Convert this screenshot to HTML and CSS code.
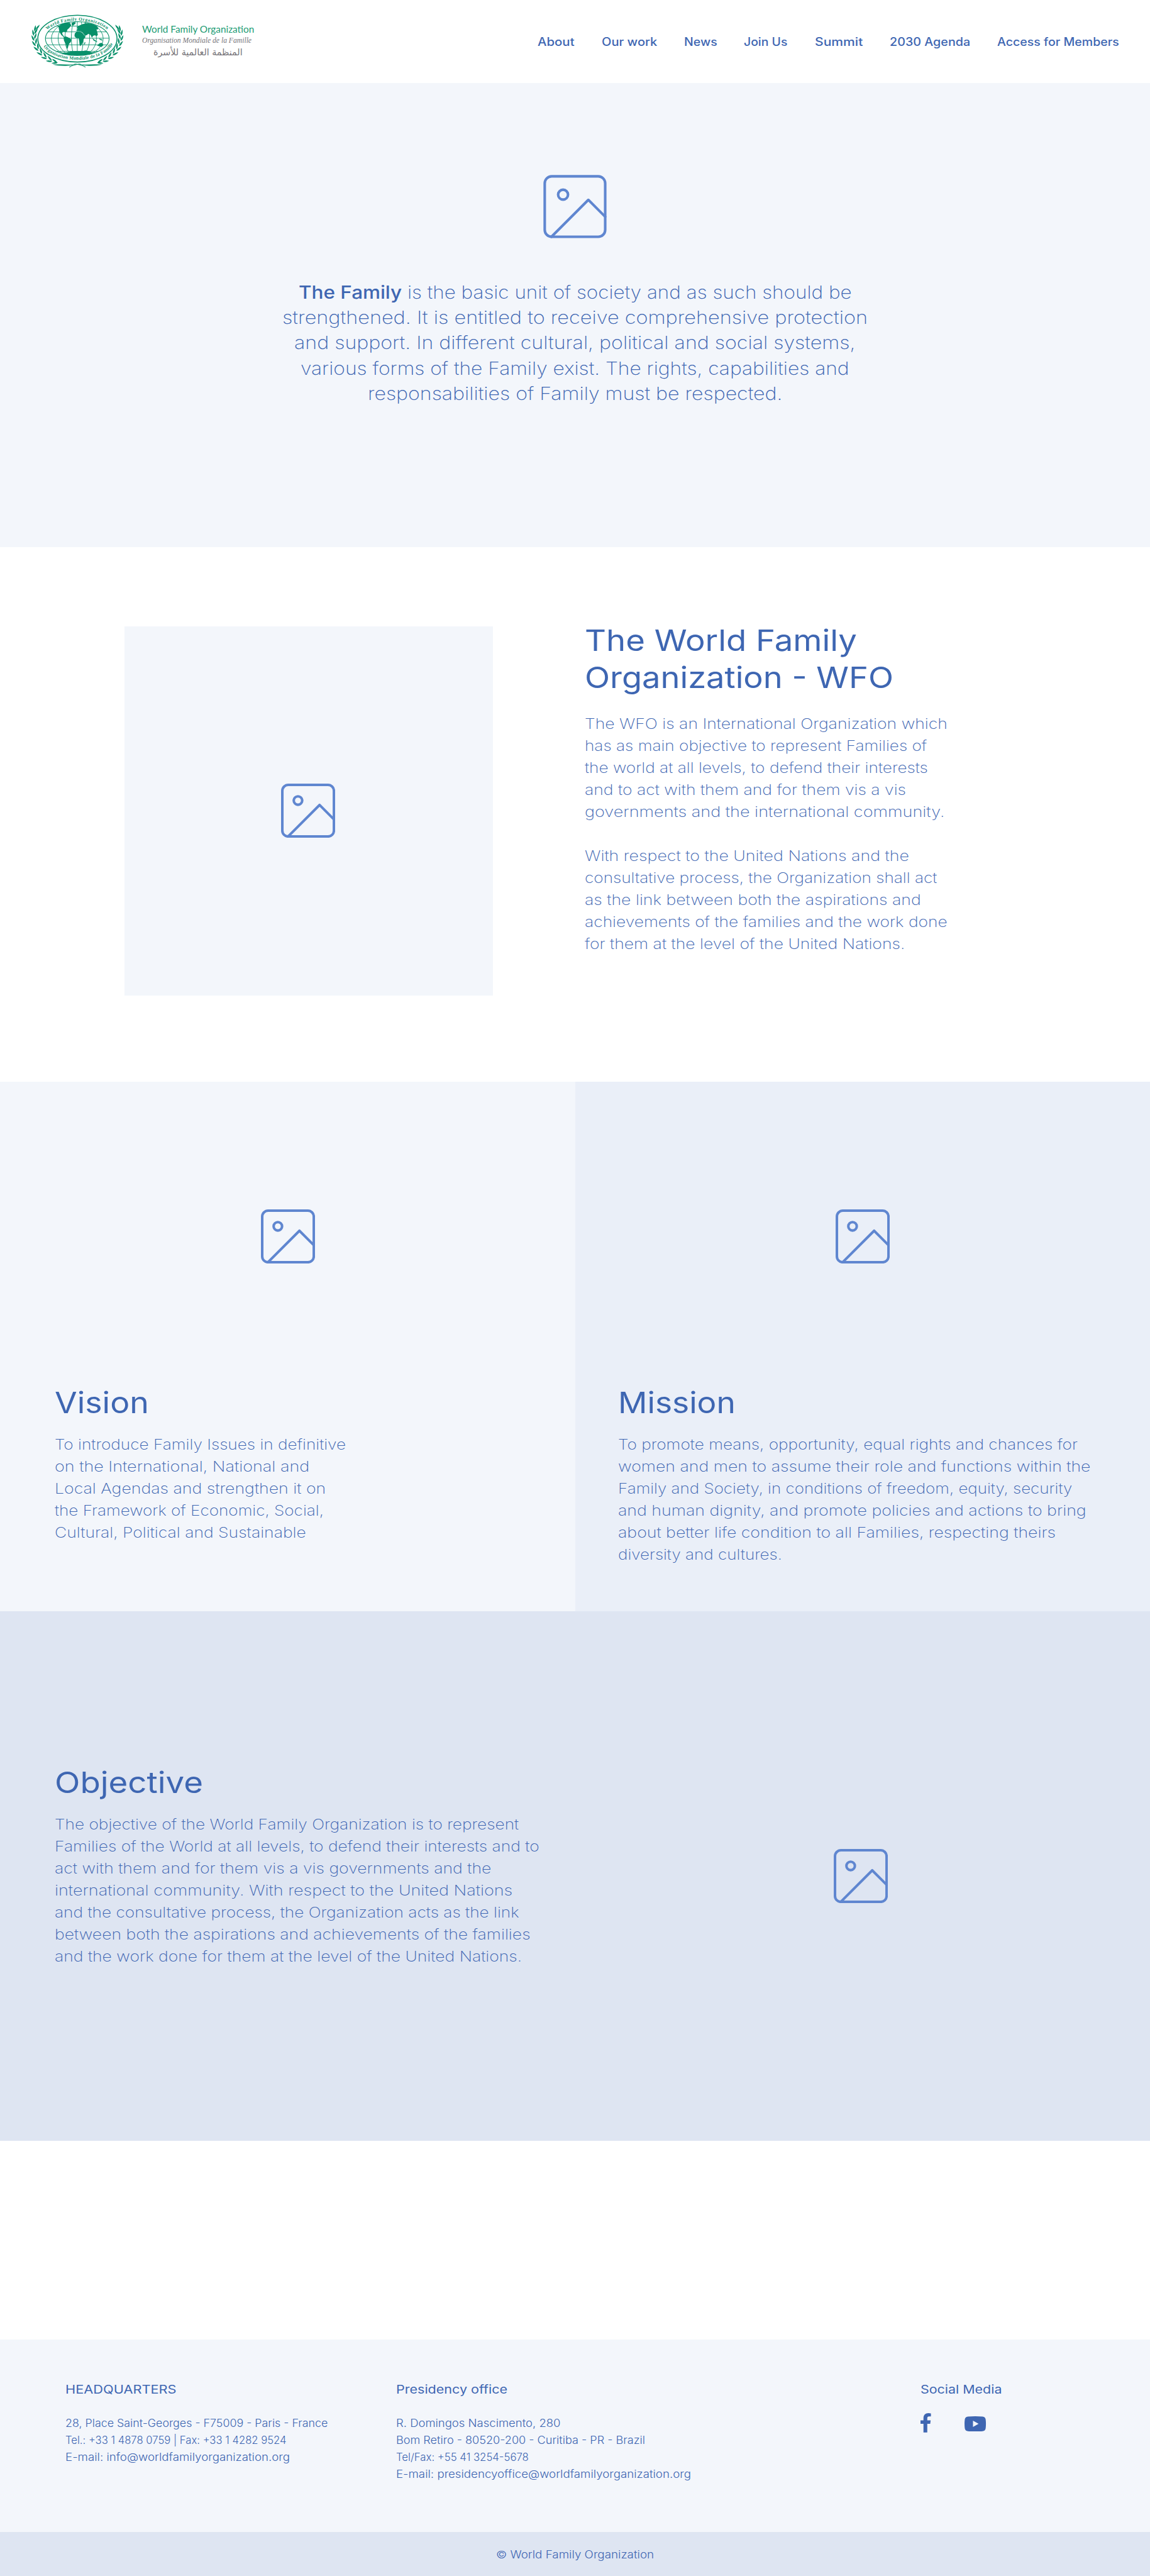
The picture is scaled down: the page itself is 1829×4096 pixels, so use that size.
FILE: index.html
```html
<!DOCTYPE html>
<html lang="en">
<head>
<meta charset="utf-8">
<title>World Family Organization</title>
<link rel="stylesheet" href="styles.css">
</head>
<body>
<svg class="defs" aria-hidden="true">
  <symbol id="picture" viewBox="0 0 128 128">
    <rect x="3" y="3" width="122" height="122" rx="14"/>
    <circle cx="40" cy="40" r="10"/>
    <path d="M16.5 125 91 50.500 125 84.500"/>
  </symbol>
</svg>

<header class="header">
  <a class="brand">
    <svg class="emblem" viewBox="0 0 750 480" role="img" aria-label="Emblem">
      <defs>
        <path id="arc-top" d="M126 218A245 130 0 0 1 616 218"/>
        <path id="arc-bottom" d="M112 218A259 148 0 0 0 630 218"/>
        <clipPath id="globe"><ellipse cx="370" cy="216" rx="226" ry="120"/></clipPath>
        <path id="leaf" d="M0 0Q14 -15 46 -3Q20 9 0 0Z"/>
        <g id="laurel">
          <use href="#leaf" transform="translate(228 386) rotate(-140)"/><use href="#leaf" transform="translate(232 386) rotate(-182)"/>
          <use href="#leaf" transform="translate(190 372) rotate(-128)"/><use href="#leaf" transform="translate(192 377) rotate(-172)"/>
          <use href="#leaf" transform="translate(153 352) rotate(-118)"/><use href="#leaf" transform="translate(156 358) rotate(-162)"/>
          <use href="#leaf" transform="translate(120 325) rotate(-106)"/><use href="#leaf" transform="translate(122 333) rotate(-150)"/>
          <use href="#leaf" transform="translate(94 292) rotate(-94)"/><use href="#leaf" transform="translate(95 302) rotate(-138)"/>
          <use href="#leaf" transform="translate(76 256) rotate(-80)"/><use href="#leaf" transform="translate(76 268) rotate(-124)"/>
          <use href="#leaf" transform="translate(66 220) rotate(-68)"/><use href="#leaf" transform="translate(65 232) rotate(-112)"/>
          <use href="#leaf" transform="translate(66 184) rotate(-56)"/><use href="#leaf" transform="translate(62 196) rotate(-98)"/>
          <use href="#leaf" transform="translate(76 154) rotate(-50)"/><use href="#leaf" transform="translate(68 166) rotate(-78)"/>
          <path d="M196 399Q260 396 320 400Q350 399 371 394Q340 408 290 409Q230 410 196 399Z"/>
          <path class="stem" d="M428 418Q400 400 350 396"/>
        </g>
      </defs>
      <ellipse class="ring" cx="371" cy="216" rx="281" ry="166"/>
      <g clip-path="url(#globe)">
        <g class="grid">
          <path d="M140 127H600M140 168H600M140 213H600M140 260H600M140 306H600M370 95V338"/>
          <ellipse cx="370" cy="210" rx="42" ry="150"/><ellipse cx="370" cy="212" rx="88" ry="140"/>
          <ellipse cx="370" cy="214" rx="136" ry="132"/><ellipse cx="370" cy="216" rx="184" ry="126"/>
        </g>
        <path d="M236 130 262 108 300 100 322 108 326 124 312 142 300 152 296 166 284 170 272 166 262 176 268 192 280 202 272 204 256 190 244 170 240 150Z"/>
        <path d="M330 104 356 98 358 108 340 124 330 118Z"/>
        <path d="M272 208 286 200 304 206 328 222 324 240 312 252 306 270 302 288 296 284 290 256 276 232Z"/>
        <path d="M352 180 366 166 384 168 402 172 412 184 428 200 426 208 414 222 410 242 400 260 390 270 386 258 384 236 380 214 360 210 350 198Z"/>
        <path d="M362 158 374 146 366 138 378 126 400 116 430 106 470 110 500 120 520 140 514 152 506 150 512 170 516 190 506 200 496 192 482 196 474 210 464 190 448 182 440 190 424 196 412 176 398 164 380 164Z"/>
        <path d="M510 264 530 248 548 246 556 262 542 276 524 270Z"/>
        <path d="M476 212 496 226 514 240 506 240 486 230ZM420 244 428 240 424 256 418 258ZM526 214 550 224 544 230 528 222Z"/>
        <path d="M240 316 290 314 320 308 360 304 400 306 430 300 470 312 510 314V345H240Z"/>
      </g>
      <ellipse class="globe-line" cx="370" cy="216" rx="226" ry="120"/>
      <text class="arc-text"><textPath href="#arc-top" startOffset="72" textLength="452">World Family Organization</textPath></text>
      <text class="arc-text"><textPath href="#arc-bottom" startOffset="58" textLength="556">Organisation Mondiale de la Famille</textPath></text>
      <use href="#laurel"/>
      <use href="#laurel" transform="translate(742 0) scale(-1 1)"/>
    </svg>
    <span class="wordmark">
      <span class="wordmark-en" data-ink="177.6">World Family Organization</span>
      <span class="wordmark-fr" data-ink="174.7">Organisation Mondiale de la Famille</span>
      <span class="wordmark-ar" lang="ar" data-ink="139.6">المنظمة العالمية للأسرة</span>
    </span>
  </a>
  <nav class="nav">
    <a data-ink="58.4">About</a>
    <a data-ink="88.2">Our work</a>
    <a data-ink="50.8">News</a>
    <a data-ink="68.6">Join Us</a>
    <a data-ink="76.2">Summit</a>
    <a data-ink="125.7">2030 Agenda</a>
    <a data-ink="193">Access for Members</a>
  </nav>
</header>

<section class="hero">
  <svg class="picture picture-large"><use href="#picture"/></svg>
  <p class="lead">
    <span class="line" data-ink="877"><strong>The Family</strong> is the basic unit of society and as such should be</span>
    <span class="line" data-ink="928">strengthened. It is entitled to receive comprehensive protection</span>
    <span class="line" data-ink="888">and support. In different cultural, political and social systems,</span>
    <span class="line" data-ink="869.5">various forms of the Family exist. The rights, capabilities and</span>
    <span class="line" data-ink="655">responsabilities of Family must be respected.</span>
  </p>
</section>

<section class="about">
  <div class="frame"><svg class="picture"><use href="#picture"/></svg></div>
  <div class="about-copy">
    <h1 class="title">
      <span class="line" data-ink="429.3">The World Family</span>
      <span class="line" data-ink="485.8">Organization - WFO</span>
    </h1>
    <p class="copy">
      <span class="line" data-ink="573.9">The WFO is an International Organization which</span>
      <span class="line" data-ink="542.6">has as main objective to represent Families of</span>
      <span class="line" data-ink="545">the world at all levels, to defend their interests</span>
      <span class="line" data-ink="509">and to act with them and for them vis a vis</span>
      <span class="line" data-ink="569.6">governments and the international community.</span>
    </p>
    <p class="copy">
      <span class="line" data-ink="515.4">With respect to the United Nations and the</span>
      <span class="line" data-ink="559">consultative process, the Organization shall act</span>
      <span class="line" data-ink="531.5">as the link between both the aspirations and</span>
      <span class="line" data-ink="575.1">achievements of the families and the work done</span>
      <span class="line" data-ink="507.6">for them at the level of the United Nations.</span>
    </p>
  </div>
</section>

<div class="panels">
  <section class="panel panel-vision">
    <svg class="picture"><use href="#picture"/></svg>
    <div class="panel-copy">
      <h2 class="title"><span class="line" data-ink="144.8">Vision</span></h2>
      <p class="copy">
        <span class="line" data-ink="461.5">To introduce Family Issues in definitive</span>
        <span class="line" data-ink="402">on the International, National and</span>
        <span class="line" data-ink="427">Local Agendas and strengthen it on</span>
        <span class="line" data-ink="426.3">the Framework of Economic, Social,</span>
        <span class="line" data-ink="398.2">Cultural, Political and Sustainable</span>
      </p>
    </div>
  </section>
  <section class="panel panel-mission">
    <svg class="picture"><use href="#picture"/></svg>
    <div class="panel-copy">
      <h2 class="title"><span class="line" data-ink="178.5">Mission</span></h2>
      <p class="copy">
        <span class="line" data-ink="729.8">To promote means, opportunity, equal rights and chances for</span>
        <span class="line" data-ink="751">women and men to assume their role and functions within the</span>
        <span class="line" data-ink="719.2">Family and Society, in conditions of freedom, equity, security</span>
        <span class="line" data-ink="741.5">and human dignity, and promote policies and actions to bring</span>
        <span class="line" data-ink="694">about better life condition to all Families, respecting theirs</span>
        <span class="line" data-ink="258.2">diversity and cultures.</span>
      </p>
    </div>
  </section>
</div>

<section class="objective">
  <div class="objective-copy">
    <h2 class="title"><span class="line" data-ink="231.3">Objective</span></h2>
    <p class="copy">
      <span class="line" data-ink="736.7">The objective of the World Family Organization is to represent</span>
      <span class="line" data-ink="767.6">Families of the World at all levels, to defend their interests and to</span>
      <span class="line" data-ink="692.7">act with them and for them vis a vis governments and the</span>
      <span class="line" data-ink="726.2">international community. With respect to the United Nations</span>
      <span class="line" data-ink="737.7">and the consultative process, the Organization acts as the link</span>
      <span class="line" data-ink="753.4">between both the aspirations and achievements of the families</span>
      <span class="line" data-ink="740.3">and the work done for them at the level of the United Nations.</span>
    </p>
  </div>
  <div class="objective-media"><svg class="picture"><use href="#picture"/></svg></div>
</section>

<footer class="footer">
  <div class="contacts">
    <div class="contact">
      <h3 class="contact-title"><span class="line" data-ink="174.3">HEADQUARTERS</span></h3>
      <address class="details">
        <span class="line" data-ink="415.5">28, Place Saint-Georges - F75009 - Paris - France</span>
        <span class="line" data-ink="351">Tel.: +33 1 4878 0759 | Fax: +33 1 4282 9524</span>
        <span class="line" data-ink="354.7">E-mail: info@worldfamilyorganization.org</span>
      </address>
    </div>
    <div class="contact">
      <h3 class="contact-title"><span class="line" data-ink="175">Presidency office</span></h3>
      <address class="details">
        <span class="line" data-ink="260">R. Domingos Nascimento, 280</span>
        <span class="line" data-ink="393.9">Bom Retiro - 80520-200 - Curitiba - PR - Brazil</span>
        <span class="line" data-ink="210.6">Tel/Fax: +55 41 3254-5678</span>
        <span class="line" data-ink="466.6">E-mail: presidencyoffice@worldfamilyorganization.org</span>
      </address>
    </div>
    <div class="contact">
      <h3 class="contact-title"><span class="line" data-ink="126.6">Social Media</span></h3>
      <div class="social">
        <svg class="facebook" viewBox="0 0 74 137"><path d="M21 137V76H0V51H21V36C21 12 35 0 56 0 64 0 70 1 74 2V23H62C51 23 48 28 48 36V51H72L69 76H48V137Z"/></svg>
        <svg class="youtube" viewBox="0 0 152 108"><path fill-rule="evenodd" d="M24 2Q76-2 128 2 147 4 150 22 154 54 150 86 147 104 128 106 76 110 24 106 5 104 2 86-2 54 2 22 5 4 24 2ZM60 31V76L100 53.500Z"/></svg>
      </div>
    </div>
  </div>
  <div class="copyright"><span class="line" data-ink="249">© World Family Organization</span></div>
</footer>
<script src="fit.js"></script>
</body>
</html>
```
FILE: styles.css
```css
* { box-sizing: border-box; }

body {
  margin: 0;
  width: 1829px;
  background: #fff;
  color: #3e66b2;
  font-family: Inter, "Open Sans", sans-serif;
}

h1, h2, h3, p { margin: 0; }

.defs { display: none; }
.line { display: block; }
[data-ink] { width: max-content; white-space: nowrap; transform-origin: 0 50%; }

.picture {
  display: block;
  flex: none;
  width: 86.1px;
  height: 86.1px;
  fill: none;
  stroke: #5f86d0;
  stroke-width: 6;
  stroke-linecap: round;
  stroke-linejoin: round;
}
.picture-large { width: 100.9px; height: 100.9px; stroke-width: 5.2; }

.header {
  display: flex;
  align-items: center;
  justify-content: space-between;
  height: 131.8px;
  padding: 0 49.500px 0 40.3px;
}
.brand { display: flex; margin-top: 2.6px; }
.emblem { width: 168.1px; height: 107.6px; fill: #08906a; }
.emblem .ring { fill: none; stroke: #08906a; stroke-width: 7; }
.emblem .globe-line { fill: none; stroke: #08906a; stroke-width: 5; }
.emblem .grid { fill: none; stroke: #08906a; stroke-width: 4; }
.emblem .stem { fill: none; stroke: #08906a; stroke-width: 5; }
.emblem .arc-text { font: 700 33px "Liberation Serif", serif; }

.wordmark { display: flex; flex-direction: column; padding: 24px 0 0 18px; }
.wordmark-en { font: 400 15.500px/18px Lato, sans-serif; color: #1d9c74; }
.wordmark-fr { font: italic 400 12px/18px "Liberation Serif", serif; color: #77757a; }
.wordmark-ar { margin-left: 18px; font: 400 15px/21px "DejaVu Sans", sans-serif; color: #77757a; }

.nav { display: flex; gap: 42.8px; font-size: 18.1px; line-height: 24px; font-weight: 500; }

.hero {
  display: flex;
  flex-direction: column;
  align-items: center;
  height: 738.3px;
  padding-top: 145.9px;
  background: #f3f6fb;
}
.lead {
  display: flex;
  flex-direction: column;
  align-items: center;
  margin-top: 66.2px;
  font-size: 28.4px;
  line-height: 40.35px;
  font-weight: 250;
}
.lead strong { font-weight: 500; }

.title { font-size: 46.6px; line-height: 59.2px; font-weight: 420; }
.copy { font-size: 23.3px; line-height: 34.97px; font-weight: 250; }

.about {
  display: flex;
  align-items: flex-start;
  gap: 146px;
  height: 850px;
  padding: 119.1px 0 0 197.7px;
}
.frame {
  display: flex;
  align-items: center;
  justify-content: center;
  width: 586.4px;
  height: 586.4px;
  margin-top: 7.1px;
  padding: 0 2px 1px 0;
  background: #f3f6fb;
}
.about-copy .title { margin-bottom: 26.2px; }
.about-copy .copy + .copy { margin-top: 35px; }

.panels { display: grid; grid-template-columns: 1fr 1fr; height: 841.8px; }
.panel { display: flex; flex-direction: column; align-items: center; padding-top: 203px; }
.panel .picture { margin-left: 1.400px; }
.panel-copy { align-self: stretch; margin-top: 191.4px; }
.panel-copy .title, .objective-copy .title { margin-bottom: 20px; }
.panel-vision { background: #f3f6fb; }
.panel-vision .panel-copy { padding-left: 87px; }
.panel-mission { background: #eaeff8; }
.panel-mission .panel-copy { padding-left: 68px; }

.objective {
  display: grid;
  grid-template-columns: 1fr 1fr;
  height: 841.9px;
  background: #dee5f2;
}
.objective-copy { padding: 242.8px 0 0 87px; }
.objective-media { display: flex; align-items: center; justify-content: center; padding-right: 6px; }

.footer { margin-top: 316.1px; background: #f3f6fb; }
.contacts {
  display: grid;
  grid-template-columns: 526.6px 833.9px 1fr;
  height: 306.6px;
  padding: 67.3px 0 0 103.500px;
}
.contact-title { margin-bottom: 29px; font-size: 18.6px; line-height: 24px; font-weight: 440; }
.details { font-size: 16.8px; line-height: 26.9px; font-weight: 280; font-style: normal; }
.social { display: flex; align-items: center; gap: 53.4px; margin-top: -3.3px; padding-left: .5px; fill: #3e66b2; }
.facebook { width: 16.6px; height: 30.7px; }
.youtube { width: 34.1px; height: 24.2px; margin-top: 4.200px; }

.copyright {
  display: flex;
  align-items: center;
  justify-content: center;
  height: 69.6px;
  padding-top: 1px;
  background: #dee5f2;
  font-size: 16.8px;
  font-weight: 280;
}
```
FILE: fit.js
```js
// Widens each text line so that its glyphs span the width given in data-ink.
const pen = document.createElement('canvas').getContext('2d');
for (const el of document.querySelectorAll('[data-ink]')) {
  const style = getComputedStyle(el);
  pen.font = `${style.fontStyle} ${style.fontWeight} ${style.fontSize} ${style.fontFamily}`;
  const m = pen.measureText(el.textContent);
  const bearings = m.width - m.actualBoundingBoxLeft - m.actualBoundingBoxRight;
  const natural = el.getBoundingClientRect().width;
  const scale = Number(el.dataset.ink) / (natural - bearings);
  el.style.width = `${natural * scale}px`;
  el.style.transform = `scaleX(${scale})`;
}
```
